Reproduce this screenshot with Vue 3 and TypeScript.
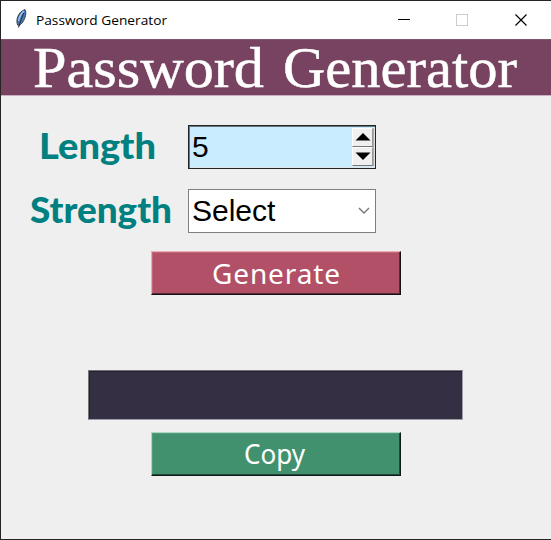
<script setup lang="ts">
import { ref } from 'vue'

const title = 'Password Generator'
const [firstWord, secondWord] = title.split(' ')
const length = ref<number>(5)
const strength = ref<string>('Select')

function step(delta: number): void {
  length.value = Math.max(1, length.value + delta)
}
</script>

<template>
  <div class="window">
    <header class="titlebar">
      <svg class="feather" width="16" height="20" viewBox="0 0 16 20">
        <path d="M12 .6 C13.8 3.6 12.4 9 9.8 13 C8.4 15 6.4 16.6 4.8 16.2 C2.8 12 4.4 6.4 7.8 3 C9.2 1.8 10.6 1.2 12 .6Z" fill="#4478b8" stroke="#3a3d44" stroke-width="1" />
        <path d="M10.8 2 C8 5 6 9 5.6 12" fill="none" stroke="#9cc4ee" stroke-width="1.5" />
        <path d="M10.8 4 C9 8 7 13 5.6 18.6" fill="none" stroke="#25272c" stroke-width="1" />
      </svg>
      <svg class="caption" width="140" height="38">
        <text x="0" y="24" textLength="131" lengthAdjust="spacingAndGlyphs">{{ title }}</text>
      </svg>
      <svg class="controls" width="140" height="38" viewBox="0 0 140 38" shape-rendering="crispEdges">
        <path d="M-2 18.5H10" stroke="#000" />
        <rect x="56.5" y="13.5" width="11" height="11" fill="none" stroke="#ccc" />
        <path d="M115.5 13.5l11 11M126.5 13.5l-11 11" stroke="#000" stroke-width="1.2" shape-rendering="auto" />
      </svg>
    </header>

    <div class="banner">
      <svg width="549" height="55">
        <text x="32" y="46.5" textLength="231" lengthAdjust="spacingAndGlyphs">{{ firstWord }}</text>
        <text x="282" y="46.5" textLength="234" lengthAdjust="spacingAndGlyphs">{{ secondWord }}</text>
      </svg>
    </div>

    <main>
      <div class="row">
        <svg class="label" width="187" height="44">
          <text x="38" y="34" textLength="117" lengthAdjust="spacingAndGlyphs">Length</text>
        </svg>
        <div class="spinbox">
          <span class="value">{{ length }}</span>
          <div class="arrows">
            <button @click="step(1)"><svg width="16" height="8"><path d="M.5 7.5L8 0L15.5 7.5Z" /></svg></button>
            <button @click="step(-1)"><svg width="16" height="8"><path d="M.5 .5H15.5L8 8Z" /></svg></button>
          </div>
        </div>
      </div>
      <div class="row second">
        <svg class="label" width="187" height="44">
          <text x="29" y="34" textLength="142" lengthAdjust="spacingAndGlyphs">Strength</text>
        </svg>
        <div class="combo">
          <span class="value">{{ strength }}</span>
          <svg width="12" height="8"><path d="M1 1L6 6L11 1" fill="none" stroke="#777" stroke-width="1.4" /></svg>
        </div>
      </div>
      <button class="action generate">
        <svg width="246" height="40">
          <text x="60" y="31" textLength="128">Generate</text>
        </svg>
      </button>
      <div class="output"></div>
      <button class="action copy">
        <svg width="246" height="40">
          <text x="92" y="30" textLength="61" lengthAdjust="spacingAndGlyphs">Copy</text>
        </svg>
      </button>
    </main>
  </div>
</template>

<style>
body {
  margin: 0;
}
</style>

<style scoped>
.window {
  box-sizing: border-box;
  width: 551px;
  height: 540px;
  border: 1px solid #252326;
  border-right-width: 0;
  background: #efefef;
}
svg {
  display: block;
  flex: none;
  overflow: visible;
}
button {
  padding: 0;
  margin: 0;
}
.titlebar {
  display: flex;
  height: 38px;
  background: #fff;
}
.feather {
  margin: 8px 0 0 12px;
}
.caption {
  margin-left: 7px;
}
.caption text {
  font: 13.5px "Open Sans", sans-serif;
}
.controls {
  margin-left: 224px;
}
.banner {
  box-sizing: border-box;
  height: 57px;
  background: #784360;
  border-top: 1px solid #80556e;
  border-bottom: 1px solid #c9b0bf;
}
.banner text {
  font: 57px "Liberation Serif", serif;
  fill: #fff;
  stroke: #fff;
  stroke-width: 0.5;
}
main {
  display: flex;
  flex-direction: column;
  align-items: flex-start;
  padding-top: 29px;
}
.row {
  display: flex;
}
.second {
  margin-top: 20px;
}
.label text {
  font: 900 36px Lato, sans-serif;
  fill: #008080;
}
.spinbox,
.combo {
  box-sizing: border-box;
  display: flex;
  width: 188px;
  height: 44px;
  border: 1px solid #7f7f7f;
  background: #fff;
}
.spinbox {
  border: 1px solid #202426;
  box-shadow: inset 1px 1px #65777f, inset -1px -1px #dfe4e6;
  background: #caecff;
}
.value {
  flex: 1;
  padding-left: 3px;
  font: 30px/40px "Liberation Sans", sans-serif;
  color: #000;
}
.spinbox .value {
  line-height: 42px;
}
.arrows {
  display: flex;
  flex-direction: column;
  width: 21px;
  margin: 2px 1px 2px 0;
  padding-right: 1px;
  background: #aaa;
}
.arrows button {
  display: flex;
  align-items: flex-start;
  justify-content: center;
  box-sizing: border-box;
  height: 19px;
  padding-top: 4px;
  border: 1px solid #fff;
  border-right-color: #999;
  border-bottom-color: #777;
  background: #f0f0f0;
}
.combo {
  align-items: center;
}
.combo svg {
  margin-right: 5px;
}
.action {
  box-sizing: border-box;
  width: 250px;
  height: 44px;
  margin-left: 150px;
  border: 1px solid;
}
.action text {
  fill: #fff;
}
.generate {
  margin-top: 18px;
  background: #b15066;
  border-color: #ecaab5 #171014 #171014 #ecaab5;
  box-shadow: inset -1px -1px #5a2a37, inset 1px 1px #c16579;
}
.generate text {
  font: 28px "Noto Sans", sans-serif;
}
.output {
  box-sizing: border-box;
  width: 375px;
  height: 50px;
  margin: 75px 0 0 87px;
  border: 1px solid #77747e;
  border-right-color: #9f9da8;
  border-bottom-color: #9f9da8;
  box-shadow: inset 1px 1px #24202f;
  background: #352f44;
}
.copy {
  margin-top: 12px;
  background: #42916e;
  border-color: #afd5c3 #101b17 #101b17 #afd5c3;
  box-shadow: inset -1px -1px #1f4a37, inset 1px 1px #529c7b;
}
.copy text {
  font: 27px "Noto Sans", sans-serif;
}
</style>
